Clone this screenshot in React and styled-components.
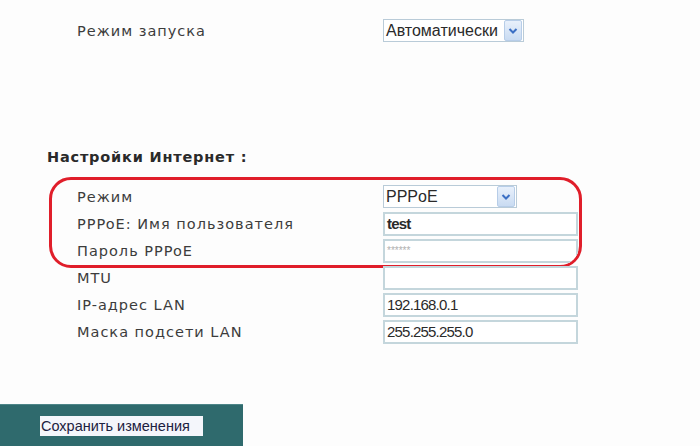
import styled, { createGlobalStyle } from "styled-components";

const GlobalStyle = createGlobalStyle`
	body {
		margin: 0;
		background: #fdfdfd;
		font-family: "DejaVu Sans", Verdana, sans-serif;
		color: #3a3a3a;
	}
`;

const Chevron = () => (
	<svg width="10" height="8" viewBox="0 0 10 8">
		<path d="M1.5 2 L5 5.5 L8.5 2" fill="none" stroke="#3b6fc4" strokeWidth="2" />
	</svg>
);

const Select = ({ value, width }) => (
	<SelectBox $width={width}>
		<SelectValue>{value}</SelectValue>
		<ArrowBox>
			<Chevron />
		</ArrowBox>
	</SelectBox>
);

const App = () => {
	return (
		<Page>
			<GlobalStyle />
			<TopRow>
				<Label>Режим запуска</Label>
				<Select value="Автоматически" width={141} />
			</TopRow>
			<Heading>Настройки Интернет :</Heading>
			<Marked>
				<Row>
					<Label>Режим</Label>
					<Select value="PPPoE" width={134} />
				</Row>
				<Row>
					<Label>PPPoE: Имя пользователя</Label>
					<Field $bold>test</Field>
				</Row>
				<Row>
					<Label>Пароль PPPoE</Label>
					<Field $muted>******</Field>
				</Row>
			</Marked>
			<Plain>
				<Row>
					<Label>MTU</Label>
					<Field></Field>
				</Row>
				<Row>
					<Label>IP-адрес LAN</Label>
					<Field>192.168.0.1</Field>
				</Row>
				<Row>
					<Label>Маска подсети LAN</Label>
					<Field>255.255.255.0</Field>
				</Row>
			</Plain>
			<Footer>
				<SaveButton>Сохранить изменения</SaveButton>
			</Footer>
		</Page>
	);
};

export default App;

const Page = styled.div`
	width: 700px;
	height: 446px;
	overflow: hidden;
	display: flex;
	flex-direction: column;
`;

const Row = styled.div`
	display: grid;
	grid-template-columns: 306px 1fr;
	align-items: center;
	height: 27px;
`;

const TopRow = styled(Row)`
	margin-top: 17px;
	padding-left: 77px;
`;

const Label = styled.div`
	font-size: 14.5px;
	letter-spacing: 1px;
	color: #3c3c3c;
	white-space: nowrap;
`;

const Heading = styled.div`
	margin: 105px 0 0 47px;
	font-size: 14.5px;
	font-weight: bold;
	letter-spacing: 0.8px;
	color: #2a2a2a;
	height: 24px;
`;

const Marked = styled.div`
	margin: 4px 0 0 49px;
	width: 502px;
	padding: 3px 0 0 25px;
	height: 82px;
	border: 3px solid #e01e2a;
	border-radius: 22px;
	overflow: hidden;
`;

const Plain = styled.div`
	padding-left: 77px;
	margin-top: -4px;
`;

const SelectBox = styled.div`
	width: ${(p) => p.$width}px;
	height: 23px;
	box-sizing: border-box;
	display: flex;
	align-items: center;
	border: 1px solid #b9cbd8;
	background: #fff;
	padding-left: 2px;
`;

const SelectValue = styled.div`
	flex: 1;
	font-family: "Liberation Sans", Arial, sans-serif;
	font-size: 16px;
	color: #2a2a2a;
`;

const ArrowBox = styled.div`
	width: 16px;
	height: 19px;
	margin-right: 1px;
	display: flex;
	align-items: center;
	justify-content: center;
	border: 1px solid #b7cde8;
	border-radius: 2px;
	background: linear-gradient(#e8f0fb, #c9dbf2);
`;

const Field = styled.div`
	width: 195px;
	height: 24px;
	box-sizing: border-box;
	border: 2px solid #c4d6dc;
	background: #fff;
	padding-left: 2px;
	font-family: "Liberation Sans", Arial, sans-serif;
	font-size: ${(p) => (p.$muted ? "10px" : "15px")};
	font-weight: ${(p) => (p.$bold ? "bold" : "normal")};
	color: ${(p) => (p.$muted ? "#b0b0b0" : "#2a2a2a")};
	line-height: 20px;
	letter-spacing: ${(p) => (p.$muted ? "0" : "-0.8px")};
`;

const Footer = styled.div`
	margin-top: auto;
	width: 243px;
	height: 42px;
	background: #2f6a6d;
	border-top: 1px solid #4d8588;
	display: flex;
	align-items: center;
	padding-left: 40px;
	box-sizing: border-box;
`;

const SaveButton = styled.div`
	background: #f4f6fb;
	color: #1c2140;
	font-family: "Liberation Sans", Arial, sans-serif;
	font-size: 14.5px;
	padding: 2px 1px;
	width: 163px;
	box-sizing: border-box;
	white-space: nowrap;
	overflow: hidden;
`;
